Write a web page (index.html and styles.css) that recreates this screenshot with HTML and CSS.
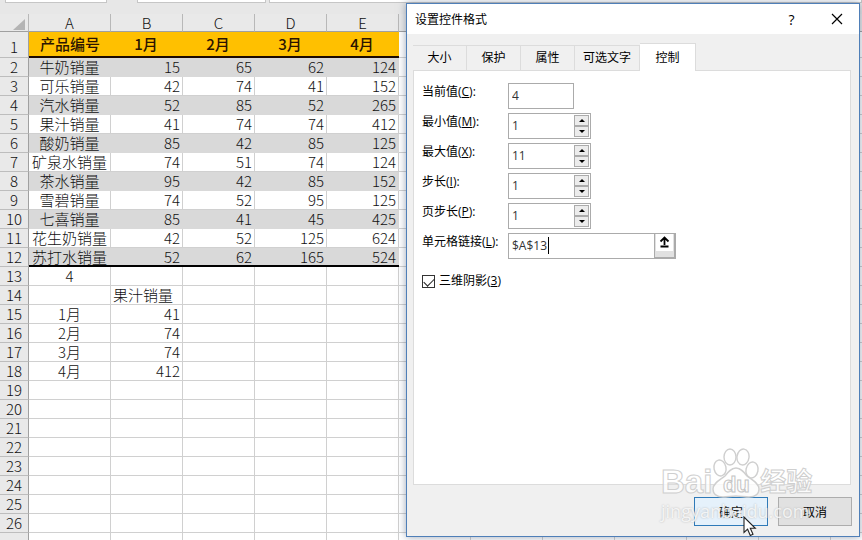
FILE: index.html
```
<!DOCTYPE html>
<html lang="zh-CN">
<head>
    <meta charset="UTF-8">
    <meta name="viewport" content="width=device-width, initial-scale=1.0">
    <title>设置控件格式</title>
    <link rel="stylesheet" href="styles.css">
</head>
<body>
    <div class="formula-bar">
        <div class="name-box"></div>
        <div class="fx-box"></div>
        <div class="formula-box"></div>
    </div>

    <table class="sheet">
        <colgroup>
            <col class="col-num">
            <col class="col-a">
            <col class="col"><col class="col"><col class="col"><col class="col">
            <col>
        </colgroup>
        <thead>
            <tr>
                <th class="corner"><svg width="12" height="11" viewBox="0 0 12 11"><path d="M12 0v11H0z" fill="#b4b4b4"/></svg></th>
                <th>A</th><th>B</th><th>C</th><th>D</th><th>E</th><th class="rest"></th>
            </tr>
        </thead>
        <tbody>
            <tr class="title-row"><th>1</th><td>产品编号</td><td>1月</td><td>2月</td><td>3月</td><td>4月</td><td class="rest"></td></tr>
            <tr class="stripe"><th>2</th><td>牛奶销量</td><td>15</td><td>65</td><td>62</td><td>124</td><td class="rest"></td></tr>
            <tr><th>3</th><td>可乐销量</td><td>42</td><td>74</td><td>41</td><td>152</td><td class="rest"></td></tr>
            <tr class="stripe"><th>4</th><td>汽水销量</td><td>52</td><td>85</td><td>52</td><td>265</td><td class="rest"></td></tr>
            <tr><th>5</th><td>果汁销量</td><td>41</td><td>74</td><td>74</td><td>412</td><td class="rest"></td></tr>
            <tr class="stripe"><th>6</th><td>酸奶销量</td><td>85</td><td>42</td><td>85</td><td>125</td><td class="rest"></td></tr>
            <tr><th>7</th><td>矿泉水销量</td><td>74</td><td>51</td><td>74</td><td>124</td><td class="rest"></td></tr>
            <tr class="stripe"><th>8</th><td>茶水销量</td><td>95</td><td>42</td><td>85</td><td>152</td><td class="rest"></td></tr>
            <tr><th>9</th><td>雪碧销量</td><td>74</td><td>52</td><td>95</td><td>125</td><td class="rest"></td></tr>
            <tr class="stripe"><th>10</th><td>七喜销量</td><td>85</td><td>41</td><td>45</td><td>425</td><td class="rest"></td></tr>
            <tr><th>11</th><td>花生奶销量</td><td>42</td><td>52</td><td>125</td><td>624</td><td class="rest"></td></tr>
            <tr class="stripe last"><th>12</th><td>苏打水销量</td><td>52</td><td>62</td><td>165</td><td>524</td><td class="rest"></td></tr>
            <tr><th>13</th><td>4</td><td></td><td></td><td></td><td></td><td class="rest"></td></tr>
            <tr><th>14</th><td></td><td class="text-cell">果汁销量</td><td></td><td></td><td></td><td class="rest"></td></tr>
            <tr><th>15</th><td>1月</td><td>41</td><td></td><td></td><td></td><td class="rest"></td></tr>
            <tr><th>16</th><td>2月</td><td>74</td><td></td><td></td><td></td><td class="rest"></td></tr>
            <tr><th>17</th><td>3月</td><td>74</td><td></td><td></td><td></td><td class="rest"></td></tr>
            <tr><th>18</th><td>4月</td><td>412</td><td></td><td></td><td></td><td class="rest"></td></tr>
            <tr><th>19</th><td></td><td></td><td></td><td></td><td></td><td class="rest"></td></tr>
            <tr><th>20</th><td></td><td></td><td></td><td></td><td></td><td class="rest"></td></tr>
            <tr><th>21</th><td></td><td></td><td></td><td></td><td></td><td class="rest"></td></tr>
            <tr><th>22</th><td></td><td></td><td></td><td></td><td></td><td class="rest"></td></tr>
            <tr><th>23</th><td></td><td></td><td></td><td></td><td></td><td class="rest"></td></tr>
            <tr><th>24</th><td></td><td></td><td></td><td></td><td></td><td class="rest"></td></tr>
            <tr><th>25</th><td></td><td></td><td></td><td></td><td></td><td class="rest"></td></tr>
            <tr><th>26</th><td></td><td></td><td></td><td></td><td></td><td class="rest"></td></tr>
            <tr><th></th><td></td><td></td><td></td><td></td><td></td><td class="rest"></td></tr>
        </tbody>
    </table>

    <div class="dialog" role="dialog" aria-labelledby="dialog-title">
        <div class="dialog-header">
            <h1 id="dialog-title" class="dialog-title">设置控件格式</h1>
            <button type="button" class="title-btn">?</button>
            <button type="button" class="title-btn" aria-label="关闭">
                <svg width="12" height="12" viewBox="0 0 12 12"><path d="M1 1l10 10M11 1L1 11" stroke="#000" stroke-width="1.2" fill="none"/></svg>
            </button>
        </div>

        <div class="tabs" role="tablist">
            <button type="button" class="tab" role="tab">大小</button>
            <button type="button" class="tab" role="tab">保护</button>
            <button type="button" class="tab" role="tab">属性</button>
            <button type="button" class="tab" role="tab">可选文字</button>
            <button type="button" class="tab active" role="tab" aria-selected="true">控制</button>
        </div>

        <form class="panel">
            <div class="form-row">
                <label for="current">当前值(<u>C</u>):</label>
                <input type="text" id="current" class="field" value="4">
            </div>
            <div class="form-row">
                <label for="min">最小值(<u>M</u>):</label>
                <div class="spinner">
                    <input type="text" id="min" value="1">
                    <div class="spin-btns">
                        <button type="button" class="spin up" aria-label="增加"></button>
                        <button type="button" class="spin down" aria-label="减少"></button>
                    </div>
                </div>
            </div>
            <div class="form-row">
                <label for="max">最大值(<u>X</u>):</label>
                <div class="spinner">
                    <input type="text" id="max" value="11">
                    <div class="spin-btns">
                        <button type="button" class="spin up" aria-label="增加"></button>
                        <button type="button" class="spin down" aria-label="减少"></button>
                    </div>
                </div>
            </div>
            <div class="form-row">
                <label for="step">步长(<u>I</u>):</label>
                <div class="spinner">
                    <input type="text" id="step" value="1">
                    <div class="spin-btns">
                        <button type="button" class="spin up" aria-label="增加"></button>
                        <button type="button" class="spin down" aria-label="减少"></button>
                    </div>
                </div>
            </div>
            <div class="form-row">
                <label for="page">页步长(<u>P</u>):</label>
                <div class="spinner">
                    <input type="text" id="page" value="1">
                    <div class="spin-btns">
                        <button type="button" class="spin up" aria-label="增加"></button>
                        <button type="button" class="spin down" aria-label="减少"></button>
                    </div>
                </div>
            </div>
            <div class="form-row">
                <label for="link">单元格链接(<u>L</u>):</label>
                <div class="ref-box">
                    <input type="text" id="link" value="$A$13">
                    <span class="caret"></span>
                    <button type="button" class="ref-btn" aria-label="折叠对话框">
                        <svg width="17" height="17" viewBox="0 0 17 17"><path fill="#fff" d="M0 0h17v17H0z"/><path d="M8.500 11V4M4.500 7.500l4-4 4 4M4.500 12.500h8" stroke="#000" stroke-width="1.800" fill="none"/></svg>
                    </button>
                </div>
            </div>
            <div class="check-row">
                <input type="checkbox" id="shadow" checked>
                <label for="shadow">三维阴影(<u>3</u>)</label>
            </div>
        </form>

        <div class="actions">
            <button type="button" class="btn primary">确定</button>
            <button type="button" class="btn">取消</button>
        </div>
    </div>

    <div class="watermark">
        <div class="wm-logo">
            <span class="wm-text">Bai</span>
            <span class="wm-paw">
                <svg width="48" height="50" viewBox="0 0 48 50">
                    <g fill="#fff" fill-opacity="0.800" stroke="#cfcfcf" stroke-width="1.400">
                        <ellipse cx="8" cy="20" rx="6" ry="8" transform="rotate(-12 8 20)"/>
                        <ellipse cx="18" cy="9" rx="6" ry="8"/>
                        <ellipse cx="31" cy="9" rx="6" ry="8" transform="rotate(8 31 9)"/>
                        <ellipse cx="40" cy="22" rx="6" ry="8" transform="rotate(12 40 22)"/>
                        <path d="M24 20c-5 0-8 4-11 8-5 4-12 7-12 13 0 5 4 8 10 8 4 0 9-1 13-1s9 1 13 1c6 0 10-3 10-8 0-6-7-9-12-13-3-4-6-8-11-8z"/>
                    </g>
                </svg>
                <span class="wm-du">du</span>
            </span>
            <span class="wm-text wm-cn">经验</span>
        </div>
        <div class="wm-url">jingyanbaidu.com</div>
    </div>

    <svg class="cursor" width="14" height="21" viewBox="0 0 14 21"><path d="M1 1v15.500l3.600-3.300 2.700 6.300 2.700-1.200-2.700-6h5z" fill="#fff" stroke="#222" stroke-width="1.100"/></svg>
</body>
</html>
```
FILE: styles.css
```
* {
    margin: 0;
    padding: 0;
    box-sizing: border-box;
}

html,
body {
    height: 100%;
}

body {
    position: relative;
    overflow: hidden;
    background: #fff;
    color: #111;
    font-family: "Open Sans", "Noto Sans CJK SC", sans-serif;
    font-size: 12px;
}

button,
input {
    font: inherit;
    color: inherit;
}

/* spreadsheet */
.formula-bar {
    display: flex;
    gap: 3px;
    height: 14px;
    padding-left: 5px;
    background: #e7e7e7;
}

.name-box,
.fx-box,
.formula-box {
    height: 3px;
    background: #fff;
    border: 1px solid #c6c6c6;
    border-top: none;
}

.name-box {
    width: 102px;
    margin-right: 27px;
}

.fx-box {
    width: 129px;
}

.formula-box {
    flex: 1;
}

.sheet {
    width: 100%;
    table-layout: fixed;
    border-collapse: separate;
    border-spacing: 0;
    font-family: "Noto Sans CJK SC", sans-serif;
    font-size: 15px;
    font-weight: 300;
    line-height: 18px;
}

.col-num {
    width: 29px;
}

.col-a {
    width: 82px;
}

.col {
    width: 72px;
}

.sheet th,
.sheet td {
    height: 19px;
    border-right: 1px solid #d0d0d0;
    border-bottom: 1px solid #d0d0d0;
    white-space: nowrap;
}

.sheet th {
    background: #e9e9e9;
    font-weight: 300;
    text-align: center;
    border-right-color: #a0a0a0;
    border-bottom-color: #bdbdbd;
}

.sheet thead th {
    height: 18px;
    line-height: 17px;
    border-right-color: #b8b8b8;
    border-bottom-color: #a0a0a0;
}

.sheet .corner {
    padding-right: 3px;
    text-align: right;
}

.corner svg {
    display: inline-block;
    vertical-align: middle;
}

.sheet td {
    padding-right: 2px;
    text-align: right;
}

.sheet td:nth-child(2) {
    padding-right: 0;
    text-align: center;
}

.sheet .text-cell {
    padding-left: 2px;
    text-align: left;
}

.sheet .title-row th,
.sheet .title-row td {
    height: 26px;
}

.title-row th {
    padding-top: 5px;
}

.sheet .title-row td:not(.rest) {
    background: #ffc000;
    border-right: none;
    border-bottom: 2px solid #1c0a00;
    color: #2b1400;
    font-weight: 500;
    text-align: center;
}

.sheet .stripe td:not(.rest) {
    background: #d9d9d9;
    border-right: none;
    border-bottom-color: #d9d9d9;
    padding-right: 3px;
}

.sheet .stripe td:nth-child(2) {
    padding-left: 2px;
}

.sheet .last td:not(.rest) {
    border-bottom: 2px solid #000;
    line-height: 17px;
}

.sheet .rest {
    border-right: none;
    background-image: repeating-linear-gradient(to right, transparent 0 71px, #d0d0d0 71px 72px);
}

/* dialog */
.dialog {
    position: absolute;
    top: 3px;
    right: 2px;
    bottom: 3px;
    left: 406px;
    display: flex;
    flex-direction: column;
    background: #f0f0f0;
    border: 1px solid #4f7fb8;
    box-shadow: 0 0 8px rgba(60, 80, 110, 0.5);
    color: #000;
}

.dialog-header {
    display: flex;
    align-items: center;
    height: 30px;
    padding-left: 8px;
    background: #fff;
}

.dialog-title {
    flex: 1;
    font-size: 12px;
    font-weight: 400;
}

.title-btn {
    display: flex;
    align-items: center;
    justify-content: center;
    width: 45px;
    height: 28px;
    background: none;
    border: none;
    font-size: 14px;
}

.tabs {
    display: flex;
    align-items: flex-end;
    height: 36px;
    padding-left: 6px;
}

.tab {
    min-width: 54px;
    height: 25px;
    padding: 0 8px 2px;
    background: #f0f0f0;
    border: 1px solid #dcdcdc;
    border-left: none;
    border-bottom: none;
}

.tab.active {
    position: relative;
    z-index: 1;
    height: 28px;
    min-width: 56px;
    margin-bottom: -1px;
    background: #fff;
}

.panel {
    flex: 1;
    margin: 0 8px 0 6px;
    padding: 12px 8px;
    background: #fff;
    border: 1px solid #dcdcdc;
}

.form-row {
    display: flex;
    height: 26px;
    margin-bottom: 4px;
}

.form-row label {
    width: 86px;
    line-height: 18px;
}

.panel input[type="text"] {
    width: 66px;
    padding: 0 3px 1px;
    background: #fff;
    border: none;
    outline: none;
    color: #333;
}

.panel .field[type="text"],
.spinner,
.ref-box {
    border: 1px solid #ababab;
}

.spinner {
    display: flex;
    width: 83px;
}

.panel .spinner input,
.panel .ref-box input {
    flex: 1;
    min-width: 0;
    width: auto;
}

.spin-btns {
    display: flex;
    flex-direction: column;
    width: 16px;
    padding: 1px 1px 1px 0;
}

.spin {
    display: flex;
    flex: 1;
    align-items: center;
    justify-content: center;
    background: #ececec;
    border: 1px solid #ababab;
}

.spin::before {
    content: "";
    border: 3px solid transparent;
}

.spin.up::before {
    border-top: none;
    border-bottom-color: #000;
}

.spin.down::before {
    border-bottom: none;
    border-top-color: #000;
}

.ref-box {
    position: relative;
    display: flex;
    width: 168px;
}

.caret {
    position: absolute;
    top: 3px;
    left: 39px;
    width: 1px;
    height: 17px;
    background: #000;
}

.ref-btn {
    display: flex;
    justify-content: center;
    width: 21px;
    background: #e1e1e1;
    border: 1px solid #ababab;
    border-width: 0 1px 1px;
}

.check-row {
    display: flex;
    align-items: center;
    gap: 4px;
    margin-top: 13px;
    line-height: 18px;
}

.check-row input {
    appearance: none;
    width: 13px;
    height: 13px;
    border: 1px solid #333;
    background: #fff;
}

.check-row input:checked::before {
    content: "";
    display: block;
    width: 9px;
    height: 5px;
    margin: 2px 1px;
    border: solid #222;
    border-width: 0 0 1px 1px;
    transform: rotate(-45deg);
}

.actions {
    display: flex;
    justify-content: flex-end;
    gap: 10px;
    padding: 12px 7px 10px;
}

.btn {
    width: 74px;
    height: 29px;
    background: #e1e1e1;
    border: 1px solid #adadad;
}

.btn.primary {
    background: #e5f1fb;
    border-color: #2f7ab8;
}

/* overlay */
.watermark {
    position: absolute;
    right: 46px;
    bottom: 16px;
    width: 155px;
    pointer-events: none;
    font-family: "Liberation Sans", "Noto Sans CJK SC", sans-serif;
    color: rgba(255, 255, 255, 0.8);
}

.wm-logo {
    display: flex;
    align-items: flex-end;
}

.wm-text {
    font-size: 33px;
    font-weight: 700;
    line-height: 32px;
    -webkit-text-stroke: 1px #cfcfcf;
}

.wm-cn {
    font-size: 26px;
}

.wm-paw {
    position: relative;
    height: 50px;
}

.wm-du {
    position: absolute;
    right: 0;
    bottom: 1px;
    left: 0;
    text-align: center;
    font-size: 22px;
    font-weight: 700;
    line-height: 24px;
    -webkit-text-stroke: 1px #c4c4c4;
}

.wm-url {
    font-family: "Open Sans", sans-serif;
    font-size: 18px;
    line-height: 26px;
    text-shadow: 0 0 2px #b4b4b4;
}

.cursor {
    position: absolute;
    right: 105px;
    bottom: 3px;
}
```
